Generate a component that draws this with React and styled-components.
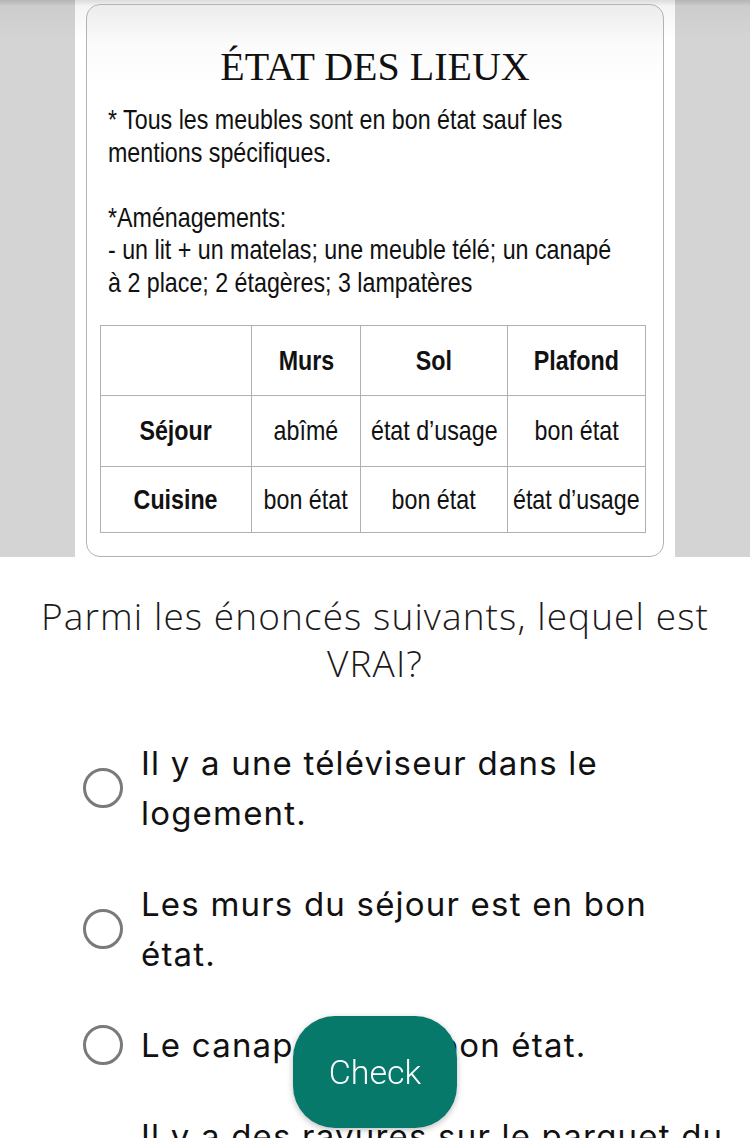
import React from 'react';
import styled, { createGlobalStyle } from 'styled-components';

const GlobalStyle = createGlobalStyle`
  html, body {
    margin: 0;
    padding: 0;
    background: #ffffff;
  }
  * {
    box-sizing: border-box;
  }
`;

const Page = styled.div`
  width: 750px;
  min-height: 1138px;
  background: #ffffff;
  padding-bottom: 200px;
`;

// the scanned document sits on a grey backdrop
const Figure = styled.div`
  height: 557px;
  display: flex;
  justify-content: center;
  background: linear-gradient(#b4b4b4 0px, #cdcdcd 6px, #d4d4d4 40px);
`;

const Sheet = styled.div`
  width: 600px;
  padding: 4px 11px 0;
  background: linear-gradient(#dcdcdc 0px, #f4f4f4 6px, #ffffff 40px);
`;

const Card = styled.div`
  height: 553px;
  border: 1px solid #b3b3b3;
  border-radius: 14px;
  padding: 39px 0 0 13px;
  background: linear-gradient(#ececec 0px, #fbfbfb 40px, #ffffff 80px);
  overflow: hidden;
`;

const Title = styled.h1`
  margin: 0;
  text-align: center;
  font-family: "Liberation Serif", "DejaVu Serif", serif;
  font-weight: 400;
  font-size: 40px;
  line-height: 45px;
  color: #111;
  padding-right: 13px;
`;

const Notes = styled.div`
  margin: 15px 0 0;
  padding-left: 8px;
  font-family: "Liberation Sans", Arial, sans-serif;
  font-size: 28px;
  line-height: 32.5px;
  color: #111;
`;

const Line = styled.div`
  height: 32.5px;
  white-space: nowrap;
`;

// no narrow face is installed, so squeeze the Arial-width face
const Narrow = styled.span`
  display: inline-block;
  white-space: nowrap;
  transform: scaleX(0.83);
  transform-origin: ${p => p.$origin || 'left'} center;
`;

const Table = styled.table`
  margin-top: 26px;
  border-collapse: collapse;
  font-family: "Liberation Sans", Arial, sans-serif;
  font-size: 28px;
  color: #111;
  table-layout: fixed;
  width: 545px;
`;

const Cell = styled.td`
  border: 1px solid #b0b0b0;
  vertical-align: middle;
  padding: 0;
  height: ${p => p.$h}px;
  font-weight: ${p => (p.$bold ? 700 : 400)};
`;

const CellBox = styled.div`
  display: flex;
  justify-content: center;
  align-items: center;
`;

const Question = styled.p`
  margin: 35px 0 0;
  padding: 0 20px;
  text-align: center;
  font-family: "Open Sans", "Lato", sans-serif;
  font-weight: 300;
  font-size: 37px;
  line-height: 47px;
  letter-spacing: 1.1px;
  color: #1a1a1a;
`;

const Options = styled.div`
  margin-top: 52px;
  display: flex;
  flex-direction: column;
  gap: 41px;
  padding-left: 83px;
`;

const Option = styled.label`
  display: flex;
  align-items: center;
  gap: 18px;
`;

const Radio = styled.span`
  flex: none;
  width: 40px;
  height: 40px;
  border-radius: 50%;
  border: 3.5px solid #7a7a7a;
  background: #fff;
`;

const OptionText = styled.span`
  width: 584px;
  font-family: "Inter", "Roboto", sans-serif;
  font-size: 33px;
  line-height: 50px;
  letter-spacing: 1.2px;
  color: #111;
`;

const CheckButton = styled.button`
  position: fixed;
  left: 293px;
  top: 1016px;
  width: 164px;
  height: 112px;
  border: none;
  border-radius: 42px;
  background: #06796a;
  color: #ffffff;
  font-family: "Roboto", "Liberation Sans", sans-serif;
  font-weight: 300;
  font-size: 34px;
  box-shadow: 0 2px 6px rgba(0, 0, 0, 0.25);
`;

const notes = [
  '* Tous les meubles sont en bon état sauf les',
  'mentions spécifiques.',
  '',
  '*Aménagements:',
  '- un lit + un matelas; une meuble télé; un canapé',
  'à 2 place; 2 étagères; 3 lampatères',
];

const rows = [
  { h: 70, cells: ['', 'Murs', 'Sol', 'Plafond'], bold: [false, true, true, true] },
  { h: 71, cells: ['Séjour', 'abîmé', 'état d’usage', 'bon état'], bold: [true, false, false, false] },
  { h: 66, cells: ['Cuisine', 'bon état', 'bon état', 'état d’usage'], bold: [true, false, false, false] },
];

const colWidths = [151, 109, 147, 138];

const answers = [
  'Il y a une téléviseur dans le logement.',
  'Les murs du séjour est en bon état.',
  'Le canapé est en bon état.',
  'Il y a des rayures sur le parquet du séjour.',
];

export default function App() {
  return (
    <Page>
      <GlobalStyle />
      <Figure>
        <Sheet>
          <Card>
            <Title>ÉTAT DES LIEUX</Title>
            <Notes>
              {notes.map((n, i) => (
                <Line key={i}>{n && <Narrow>{n}</Narrow>}</Line>
              ))}
            </Notes>
            <Table>
              <colgroup>
                {colWidths.map((w, i) => (
                  <col key={i} style={{ width: w }} />
                ))}
              </colgroup>
              <tbody>
                {rows.map((row, r) => (
                  <tr key={r}>
                    {row.cells.map((c, i) => (
                      <Cell key={i} $h={row.h} $bold={row.bold[i]}>
                        <CellBox>
                          {c && <Narrow $origin="center">{c}</Narrow>}
                        </CellBox>
                      </Cell>
                    ))}
                  </tr>
                ))}
              </tbody>
            </Table>
          </Card>
        </Sheet>
      </Figure>

      <Question>Parmi les énoncés suivants, lequel est VRAI?</Question>

      <Options>
        {answers.map((a, i) => (
          <Option key={i}>
            <Radio />
            <OptionText>{a}</OptionText>
          </Option>
        ))}
      </Options>

      <CheckButton>Check</CheckButton>
    </Page>
  );
}
